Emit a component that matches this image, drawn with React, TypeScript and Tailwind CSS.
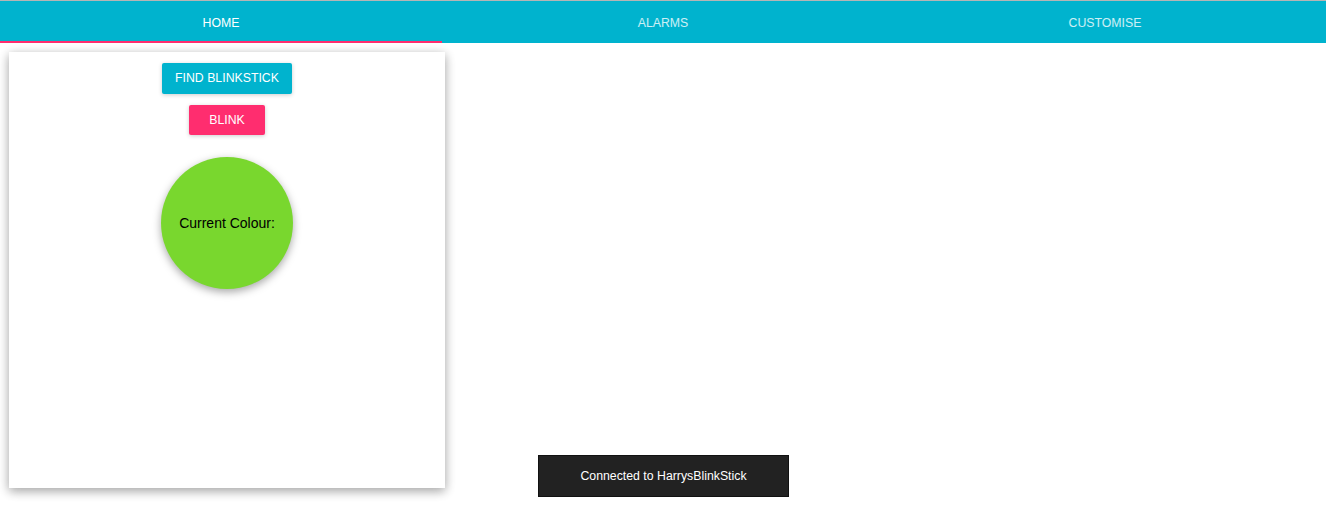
export default function App() {
  const tabs = ["HOME", "ALARMS", "CUSTOMISE"];
  return (
    <div className="relative h-[512px] w-[1326px] overflow-hidden bg-white font-['Liberation_Sans',Arial,sans-serif]">
      <div className="h-px bg-[#b5b5b5]" />
      {/* tabs */}
      <div className="flex h-[42px] bg-[#00b3ce]">
        {tabs.map((t, i) => (
          <div key={t} className="relative flex flex-1 items-center justify-center pt-[2px]">
            <span className={`text-[12.3px] ${i === 0 ? "text-white" : "text-white/80"}`}>{t}</span>
            {i === 0 && <div className="absolute bottom-0 left-0 right-0 h-[2px] bg-[#ff2d6f]" />}
          </div>
        ))}
      </div>
      <div className="flex pl-[9px] pt-[9px]">
        <div className="flex h-[436px] w-[436px] flex-col items-center bg-white pt-[11px] shadow-[0_3px_10px_rgba(0,0,0,0.23),0_3px_10px_rgba(0,0,0,0.16)]">
          <button className="h-[31px] w-[130px] rounded-[2px] bg-[#00b3ce] text-[12.3px] text-white shadow-[0_1px_4px_rgba(0,0,0,0.2)]">
            FIND BLINKSTICK
          </button>
          <button className="mt-[11px] h-[30px] w-[76px] rounded-[2px] bg-[#ff2d6f] text-[12.3px] text-white shadow-[0_1px_4px_rgba(0,0,0,0.2)]">
            BLINK
          </button>
          <div className="mt-[22px] flex h-[132px] w-[132px] items-center justify-center rounded-full bg-[#79d72e] text-[14px] text-black shadow-[0_3px_8px_rgba(0,0,0,0.35)]">
            Current Colour:
          </div>
        </div>
      </div>
      {/* snackbar */}
      <div className="absolute left-[538px] top-[455px] flex h-[42px] w-[251px] items-center justify-center border border-[#111] bg-[#222] text-[12.3px] text-white">
        Connected to HarrysBlinkStick
      </div>
    </div>
  );
}
